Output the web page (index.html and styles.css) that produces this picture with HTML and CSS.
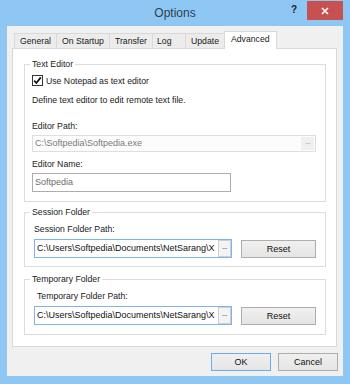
FILE: index.html
```html
<!DOCTYPE html>
<html lang="en">
<head>
  <meta charset="UTF-8">
  <title>Options</title>
  <link rel="stylesheet" href="styles.css">
</head>
<body>
  <div class="window">
    <div class="titlebar">
      <div class="title">Options</div>
      <div class="title-controls">
        <div class="help">?</div>
        <div class="close">
          <svg width="8" height="8" viewBox="0 0 8 8"><path d="M1 1L7 7M7 1L1 7" stroke="#fff" stroke-width="1.6"/></svg>
        </div>
      </div>
    </div>

    <div class="client">
      <div class="tabs">
        <div class="tab">General</div>
        <div class="tab">On Startup</div>
        <div class="tab">Transfer</div>
        <div class="tab tab-log">Log</div>
        <div class="tab">Update</div>
        <div class="tab active">Advanced</div>
      </div>

      <div class="panel">
        <fieldset class="group group-editor">
          <legend>Text Editor</legend>
          <div class="check-row">
            <span class="checkbox">
              <svg width="9" height="9" viewBox="0 0 9 9"><path d="M1.2 4.6L3.4 7L7.8 1.4" fill="none" stroke="#111" stroke-width="1.7"/></svg>
            </span>
            <span>Use Notepad as text editor</span>
          </div>
          <div class="note">Define text editor to edit remote text file.</div>
          <div class="label label-path">Editor Path:</div>
          <div class="field field-disabled">
            <span class="field-text">C:\Softpedia\Softpedia.exe</span>
            <span class="browse">...</span>
          </div>
          <div class="label label-name">Editor Name:</div>
          <div class="field field-name">
            <span class="field-text">Softpedia</span>
          </div>
        </fieldset>

        <fieldset class="group group-folder">
          <legend>Session Folder</legend>
          <div class="label folder-label">Session Folder Path:</div>
          <div class="folder-row">
            <div class="field field-focus">
              <span class="field-text">C:\Users\Softpedia\Documents\NetSarang\X</span>
              <span class="browse">...</span>
            </div>
            <button class="btn btn-reset">Reset</button>
          </div>
        </fieldset>

        <fieldset class="group group-folder group-temp">
          <legend>Temporary Folder</legend>
          <div class="label folder-label temp-label">Temporary Folder Path:</div>
          <div class="folder-row">
            <div class="field field-focus">
              <span class="field-text">C:\Users\Softpedia\Documents\NetSarang\X</span>
              <span class="browse">...</span>
            </div>
            <button class="btn btn-reset">Reset</button>
          </div>
        </fieldset>
      </div>

      <div class="dialog-buttons">
        <button class="btn btn-default">OK</button>
        <button class="btn">Cancel</button>
      </div>
    </div>
  </div>
</body>
</html>
```

FILE: styles.css
```css
body {
  margin: 0;
  padding: 0;
}

.window {
  width: 350px;
  height: 384px;
  background-color: #8ec7f4;
  font-family: "Liberation Sans", Arial, sans-serif;
  font-size: 8.7px;
  color: #1a1a1a;
  overflow: hidden;
}

/* title bar */
.titlebar {
  display: grid;
  grid-template-columns: 1fr auto 1fr;
  height: 26px;
}

.title {
  grid-column: 2;
  font-size: 12px;
  line-height: 26px;
  color: #2f3e4f;
}

.title-controls {
  grid-column: 3;
  justify-self: end;
  display: flex;
  align-items: flex-start;
}

.help {
  font-size: 10px;
  font-weight: bold;
  line-height: 12px;
  margin-top: 4px;
  margin-right: 10px;
  color: #222;
}

.close {
  width: 36px;
  height: 19px;
  margin-top: 1px;
  margin-right: 7px;
  background-color: #c75050;
  display: flex;
  justify-content: center;
  align-items: center;
}

/* client area */
.client {
  margin: 0 7px;
  height: 350px;
  background-color: #f0f0f0;
  padding-top: 5px;
  box-sizing: border-box;
}

.tabs {
  display: flex;
  align-items: flex-end;
  height: 17px;
  padding-left: 7px;
}

.tab {
  height: 15px;
  line-height: 14px;
  padding: 0 5px;
  box-sizing: border-box;
  border: 1px solid #d9d9d9;
  border-bottom: none;
  background-color: #ececec;
  margin-left: -1px;
}

.tab:first-child {
  margin-left: 0;
}

.tab-log {
  min-width: 34px;
  padding-left: 4px;
}

.tab.active {
  height: 18px;
  margin-bottom: -1px;
  line-height: 15px;
  background-color: #fff;
  position: relative;
  z-index: 1;
  padding: 0 6px;
}

.panel {
  margin-left: 5px;
  width: 325px;
  height: 299px;
  box-sizing: border-box;
  background-color: #fff;
  border: 1px solid #d9d9d9;
  padding-top: 9px;
}

/* group boxes */
.group {
  margin: 0 10px 0 11px;
  padding: 0 9px 9px 7px;
  border: 1px solid #dcdcdc;
  min-width: 0;
}

.group legend {
  line-height: 12px;
  padding: 0 2px;
  margin-left: -2px;
}

.group-folder {
  margin-top: 4px;
  padding: 0 9px 8px 9px;
}

.group-folder legend {
  margin-left: -4px;
}

.group-temp {
  margin-top: 6px;
  padding-bottom: 9px;
}

.check-row {
  display: flex;
  align-items: center;
  gap: 3px;
  height: 11px;
  margin-top: 5px;
}

.checkbox {
  width: 11px;
  height: 11px;
  box-sizing: border-box;
  border: 1px solid #333;
  background-color: #fff;
  display: flex;
  justify-content: center;
  align-items: center;
}

.note {
  line-height: 12px;
  margin-top: 8px;
}

.label {
  line-height: 12px;
}

.label-path {
  margin-top: 14px;
}

.label-name {
  margin-top: 6px;
}

.folder-label {
  margin-top: 5px;
}

.temp-label {
  padding-left: 3px;
}

/* text fields */
.field {
  display: flex;
  box-sizing: border-box;
  border: 1px solid #b9b9b9;
  background-color: #fff;
  margin-top: 3px;
  font-size: 9px;
}

.field-text {
  flex: 1;
  overflow: hidden;
  white-space: nowrap;
  padding-left: 2px;
}

.browse {
  width: 13px;
  box-sizing: border-box;
  text-align: center;
  font-size: 8px;
  letter-spacing: -0.5px;
  background-color: #efefef;
  display: flex;
  align-items: flex-end;
  justify-content: center;
  padding-bottom: 1px;
}

.field-disabled {
  height: 17px;
  line-height: 15px;
  border-color: #dedede;
  background-color: #fcfcfc;
  color: #7a7a7a;
}

.field-disabled .browse {
  color: #9a9a9a;
  margin: 1px;
}

.field-name {
  width: 199px;
  height: 19px;
  line-height: 17px;
  border-color: #adadad;
  color: #6d6d6d;
}

.folder-row {
  display: flex;
  align-items: center;
  gap: 9px;
  margin-top: 4px;
}

.field-focus {
  width: 198px;
  height: 19px;
  line-height: 17px;
  margin-top: 0;
  border-color: #7eb4ea;
  color: #111;
}

.field-focus .browse {
  border: 1px solid #cfcfcf;
  background-color: #f3f3f3;
  margin: 0 0 0 1px;
  color: #333;
}

/* buttons */
.btn {
  font-family: inherit;
  font-size: 9px;
  color: #111;
  width: 60px;
  height: 18px;
  padding: 0;
  border: 1px solid #adadad;
  background: linear-gradient(#f0f0f0, #e5e5e5);
  box-sizing: border-box;
}

.btn-reset {
  width: 75px;
}

.btn-default {
  border-color: #6aaee8;
}

.dialog-buttons {
  display: flex;
  justify-content: flex-end;
  gap: 7px;
  margin-top: 6px;
  padding-right: 5px;
}
```
